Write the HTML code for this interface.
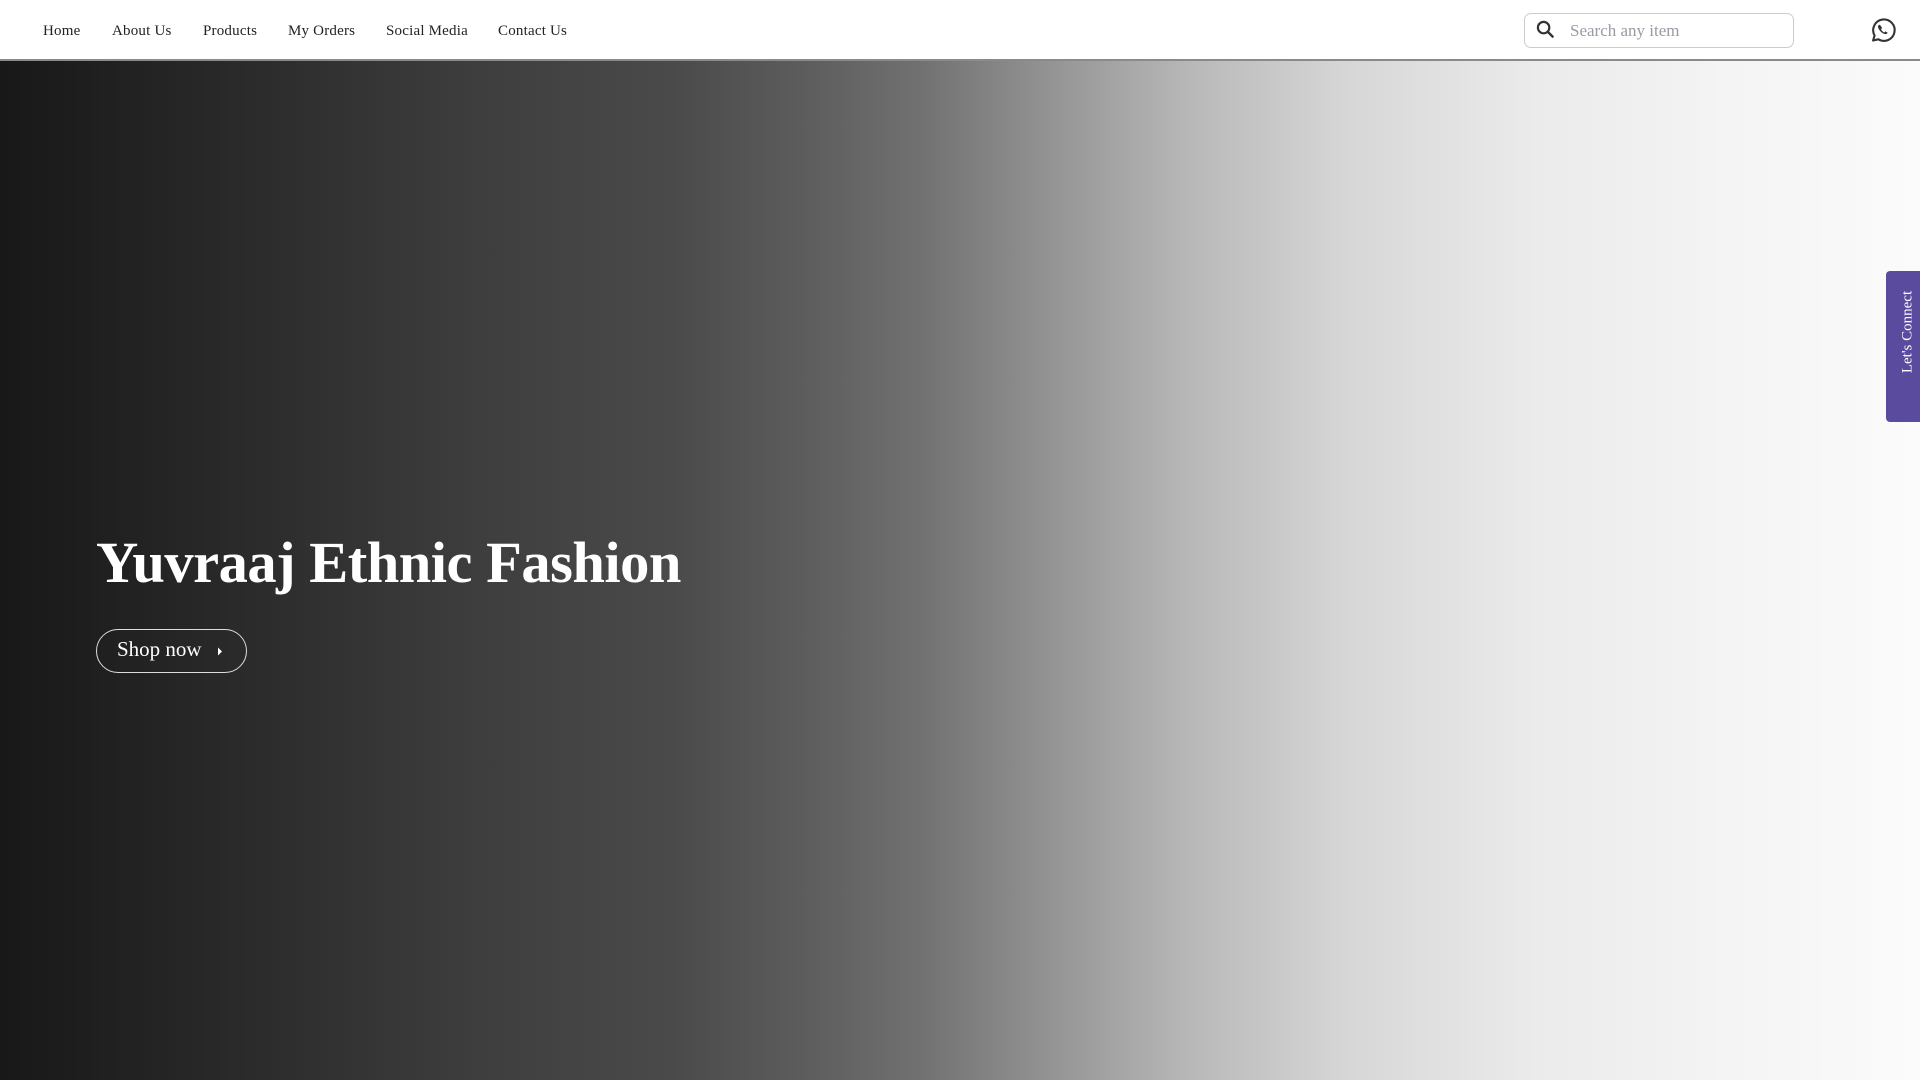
<!DOCTYPE html>
<html><head><style>
*{margin:0;padding:0;box-sizing:border-box}
body{width:1920px;height:1080px;overflow:hidden;font-family:"Liberation Serif",serif;background:#fff;position:relative}
.nav{position:absolute;top:0;left:0;width:1920px;height:61px;background:#fff;border-bottom:2px solid #8a8a8a;z-index:2}
.nav a{position:absolute;top:23px;font-size:15px;color:#222;text-decoration:none;letter-spacing:0.2px}
.hero{position:absolute;top:60px;left:0;width:1920px;height:1020px;background:linear-gradient(90deg,#181818 0%,#1c1c1c 3%,#2e2e2e 15%,#3e3e3e 25%,#4a4a4a 35%,#5d5d5d 42%,#717171 48%,#959595 55%,#b8b8b8 62%,#d6d6d6 70%,#ebebeb 80%,#f4f4f4 90%,#fbfbfb 100%)}
.search{position:absolute;left:1524px;top:13px;width:270px;height:35px;border:1px solid #ccc;border-radius:7px;background:#fff}
.search span{position:absolute;left:45px;top:7px;font-size:17px;color:#9a9aa5}
h1{position:absolute;left:96px;top:529px;font-size:58.5px;font-weight:bold;color:#fff;white-space:nowrap;letter-spacing:-0.5px}
.btn{position:absolute;left:96px;top:629px;width:151px;height:44px;border:1px solid #ddd;border-radius:22px;color:#fff;font-size:21px}
.btn span{position:absolute;left:20px;top:7px}
.tab{position:absolute;left:1886px;top:271px;width:36px;height:151px;background:#5a4b9f;border-radius:4px 0 0 4px}
.tab span{position:absolute;left:22px;top:61px;transform:translate(-50%,-50%) rotate(-90deg);color:#fff;font-size:15px;white-space:nowrap}
</style></head><body>
<div class="nav">
<a style="left:43px">Home</a>
<a style="left:112px">About Us</a>
<a style="left:203px">Products</a>
<a style="left:288px">My Orders</a>
<a style="left:386px">Social Media</a>
<a style="left:498px">Contact Us</a>
<div class="search">
<svg style="position:absolute;left:11px;top:6px" width="19" height="19" viewBox="0 0 20 20"><circle cx="8" cy="8" r="6" fill="none" stroke="#333" stroke-width="2.3"/><line x1="12.5" y1="12.5" x2="17.5" y2="17.5" stroke="#333" stroke-width="2.5" stroke-linecap="round"/></svg>
<span>Search any item</span></div>
<svg style="position:absolute;left:1869px;top:16px" width="28" height="28" viewBox="0 0 24 24"><path d="M3.5 21l1.3-4.3A9.2 9.2 0 1 1 8 20z" fill="none" stroke="#333" stroke-width="1.8" stroke-linejoin="round"/><path d="M9 7.5c-.6 0-1.3.7-1.3 1.6 0 2.5 3.8 6.4 6.5 6.4 1 0 1.7-.7 1.7-1.3l-1.9-1-1 .9c-1-.4-2.3-1.7-2.7-2.7l.9-1-1-1.9z" fill="#333"/></svg>
</div>
<div class="hero"></div>
<h1>Yuvraaj Ethnic Fashion</h1>
<div class="btn"><span>Shop now</span><svg style="position:absolute;left:120px;top:17px" width="6" height="9" viewBox="0 0 6 9"><path d="M1 0.5L5 4.5 1 8.5z" fill="#fff"/></svg></div>
<div class="tab"><span>Let's Connect</span></div>
</body></html>
